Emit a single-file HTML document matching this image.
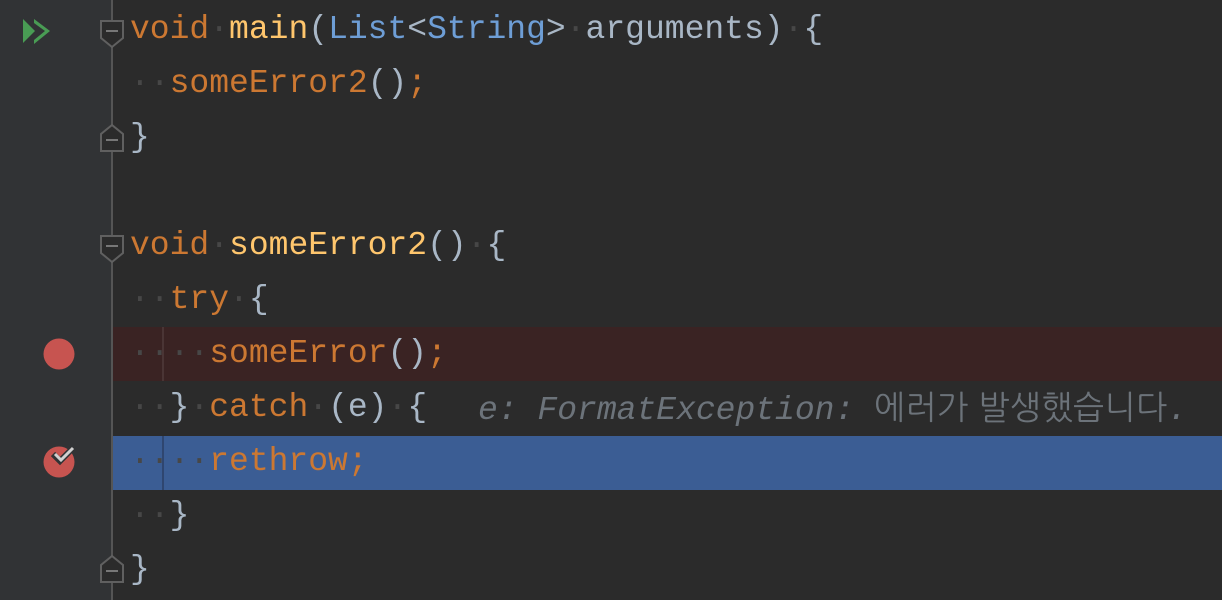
<!DOCTYPE html>
<html><head><meta charset="utf-8"><style>
html,body{margin:0;padding:0;}
body{width:1222px;height:600px;background:#2b2b2b;position:relative;overflow:hidden;font-family:"Liberation Mono","NanumGothic",monospace;font-size:33px;}
.gut{position:absolute;left:0;top:0;width:112px;height:600px;background:#313335;}
.vl{position:absolute;left:111px;top:0;width:2px;height:600px;background:#555555;}
.ln{position:absolute;left:130px;height:54px;line-height:54px;white-space:pre;color:#a9b7c6;}
.k{color:#cc7832}.f{color:#ffc66d}.t{color:#6e9ed6}.c{color:#cc7832}
.d{color:#474747}
.hl{position:absolute;left:113px;width:1109px;height:54px;}
.hint{position:absolute;left:478px;top:381px;line-height:54px;height:54px;color:#6c737a;font-style:italic;white-space:pre;}
.ko{font-style:normal;font-family:"NanumGothic",sans-serif;font-size:33px;letter-spacing:0.5px;}
.guide{position:absolute;left:162px;width:2px;height:54px;background:#4a4a4a;}
</style></head><body>
<div class="gut"></div>
<div class="hl" style="top:327px;background:#3a2323"></div>
<div class="hl" style="top:436px;background:#3b5d94"></div>
<div class="guide" style="top:327px;background:#4a3535"></div>
<div class="guide" style="top:436px;background:#2f4670"></div>
<div class="vl"></div>
<svg style="position:absolute;left:0;top:0" width="130" height="600">
<polygon points="23,19 35,31 23,43" fill="#499c54"/>
<polygon points="34,19 50,31 34,44 34,40 45,31 34,23" fill="#499c54"/>
<g fill="#2b2b2b" stroke="#606060" stroke-width="2">
<polygon points="101,21 123,21 123,38 112,47 101,38"/>
<polygon points="101,236 123,236 123,253 112,262 101,253"/>
<polygon points="112,125 123,134 123,151 101,151 101,134"/>
<polygon points="112,556 123,565 123,582 101,582 101,565"/>
</g>
<g stroke="#777" stroke-width="2"><line x1="106" y1="31" x2="118" y2="31"/><line x1="106" y1="246" x2="118" y2="246"/><line x1="106" y1="140" x2="118" y2="140"/><line x1="106" y1="571" x2="118" y2="571"/></g>
<circle cx="59" cy="354" r="15.5" fill="#c75450"/>
<circle cx="59" cy="462" r="15.5" fill="#c75450"/>
<path d="M53,454 L60,461 L74,447" fill="none" stroke="#313335" stroke-width="6"/>
<path d="M55,454 L61,460 L73,448" fill="none" stroke="#d0d0d0" stroke-width="3"/>
</svg>
<div class="ln" style="top:3px"><span class="k">void</span><span class="d">·</span><span class="f">main</span>(<span class="t">List</span>&lt;<span class="t">String</span>&gt;<span class="d">·</span>arguments)<span class="d">·</span>{</div>
<div class="ln" style="top:57px"><span class="d">··</span><span class="c">someError2</span>()<span class="k">;</span></div>
<div class="ln" style="top:111px">}</div>
<div class="ln" style="top:219px"><span class="k">void</span><span class="d">·</span><span class="f">someError2</span>()<span class="d">·</span>{</div>
<div class="ln" style="top:273px"><span class="d">··</span><span class="k">try</span><span class="d">·</span>{</div>
<div class="ln" style="top:327px"><span class="d">····</span><span class="c">someError</span>()<span class="k">;</span></div>
<div class="ln" style="top:381px"><span class="d">··</span>}<span class="d">·</span><span class="k">catch</span><span class="d">·</span>(e)<span class="d">·</span>{</div>
<div class="hint">e: FormatException: <span class="ko">에러가 발생했습니다</span>.</div>
<div class="ln" style="top:435px"><span class="d">····</span><span class="k">rethrow;</span></div>
<div class="ln" style="top:489px"><span class="d">··</span>}</div>
<div class="ln" style="top:543px">}</div>
</body></html>
